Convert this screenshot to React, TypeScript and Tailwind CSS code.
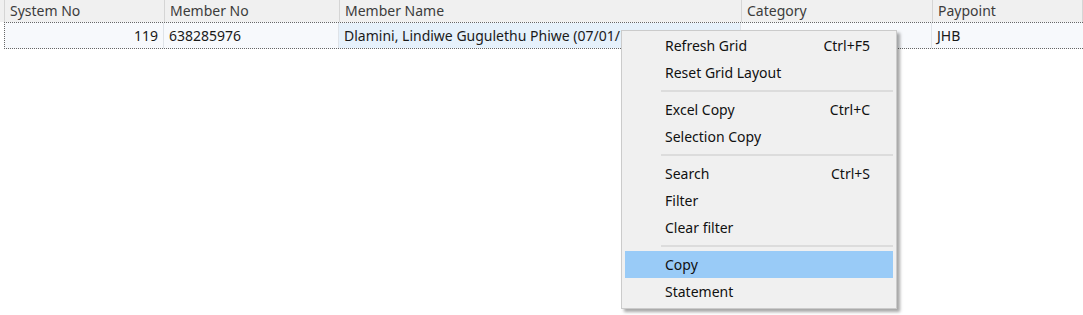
import React from "react";

const columns = [
  { key: "sys", label: "System No", width: "w-[160px]" },
  { key: "mem", label: "Member No", width: "w-[175px]" },
  { key: "name", label: "Member Name", width: "w-[402px]" },
  { key: "cat", label: "Category", width: "w-[191px]" },
  { key: "pay", label: "Paypoint", width: "flex-1" },
];

type MenuItem = { label: string; shortcut?: string; active?: boolean } | "sep";

const menu: MenuItem[] = [
  { label: "Refresh Grid", shortcut: "Ctrl+F5" },
  { label: "Reset Grid Layout" },
  "sep",
  { label: "Excel Copy", shortcut: "Ctrl+C" },
  { label: "Selection Copy" },
  "sep",
  { label: "Search", shortcut: "Ctrl+S" },
  { label: "Filter" },
  { label: "Clear filter" },
  "sep",
  { label: "Copy", active: true },
  { label: "Statement" },
];

export default function App() {
  return (
    <div
      className="relative w-[1083px] h-[315px] bg-white overflow-hidden text-[14px] text-[#1a1a1a]"
      style={{ fontFamily: '"Noto Sans", "Open Sans", sans-serif' }}
    >
      {/* Header */}
      <div className="flex h-[22px] bg-[#f0f0f0] text-[#3c3c3c]">
        <div className="w-[5px] border-r border-[#d5d5d5]" />
        {columns.map((c) => (
          <div
            key={c.key}
            className={`${c.width} shrink-0 border-r border-[#d5d5d5] pl-[5px] flex items-center leading-none`}
          >
            {c.label}
          </div>
        ))}
      </div>

      {/* Selected row */}
      <div className="flex h-[27px] ml-[4px] border border-dotted border-[#666666] border-r-0 bg-[#f7f9fc]">
        <div className="w-[159px] shrink-0 border-r border-[#dfe3e8] flex items-center justify-end pr-[5px]">
          119
        </div>
        <div className="w-[175px] shrink-0 border-r border-[#dfe3e8] flex items-center pl-[5px]">
          638285976
        </div>
        <div className="w-[402px] shrink-0 border-r border-[#dfe3e8] bg-[#e6f1fb] flex items-center pl-[5px] whitespace-nowrap overflow-hidden">
          Dlamini, Lindiwe Gugulethu Phiwe (07/01/1985)
        </div>
        <div className="w-[191px] shrink-0 border-r border-[#dfe3e8] flex items-center pl-[5px]" />
        <div className="flex-1 flex items-center pl-[5px]">JHB</div>
      </div>

      {/* Context menu */}
      <div className="absolute left-[621px] top-[30px] w-[276px] bg-[#f0f0f0] border border-[#cbcbcb] shadow-[3px_3px_3px_rgba(0,0,0,0.35)] pt-[1px] pb-[3px] px-[3px] text-[#111]">
        {menu.map((m, i) =>
          m === "sep" ? (
            <div key={i} className="h-[10px] flex items-center pl-[36px]">
              <div className="h-[2px] w-full bg-[#dcdcdc]" />
            </div>
          ) : (
            <div
              key={i}
              className={`h-[27px] flex items-center pl-[40px] pr-[23px] ${
                m.active ? "bg-[#99cbf7]" : ""
              }`}
            >
              <span className="flex-1">{m.label}</span>
              {m.shortcut && <span>{m.shortcut}</span>}
            </div>
          )
        )}
      </div>
    </div>
  );
}
